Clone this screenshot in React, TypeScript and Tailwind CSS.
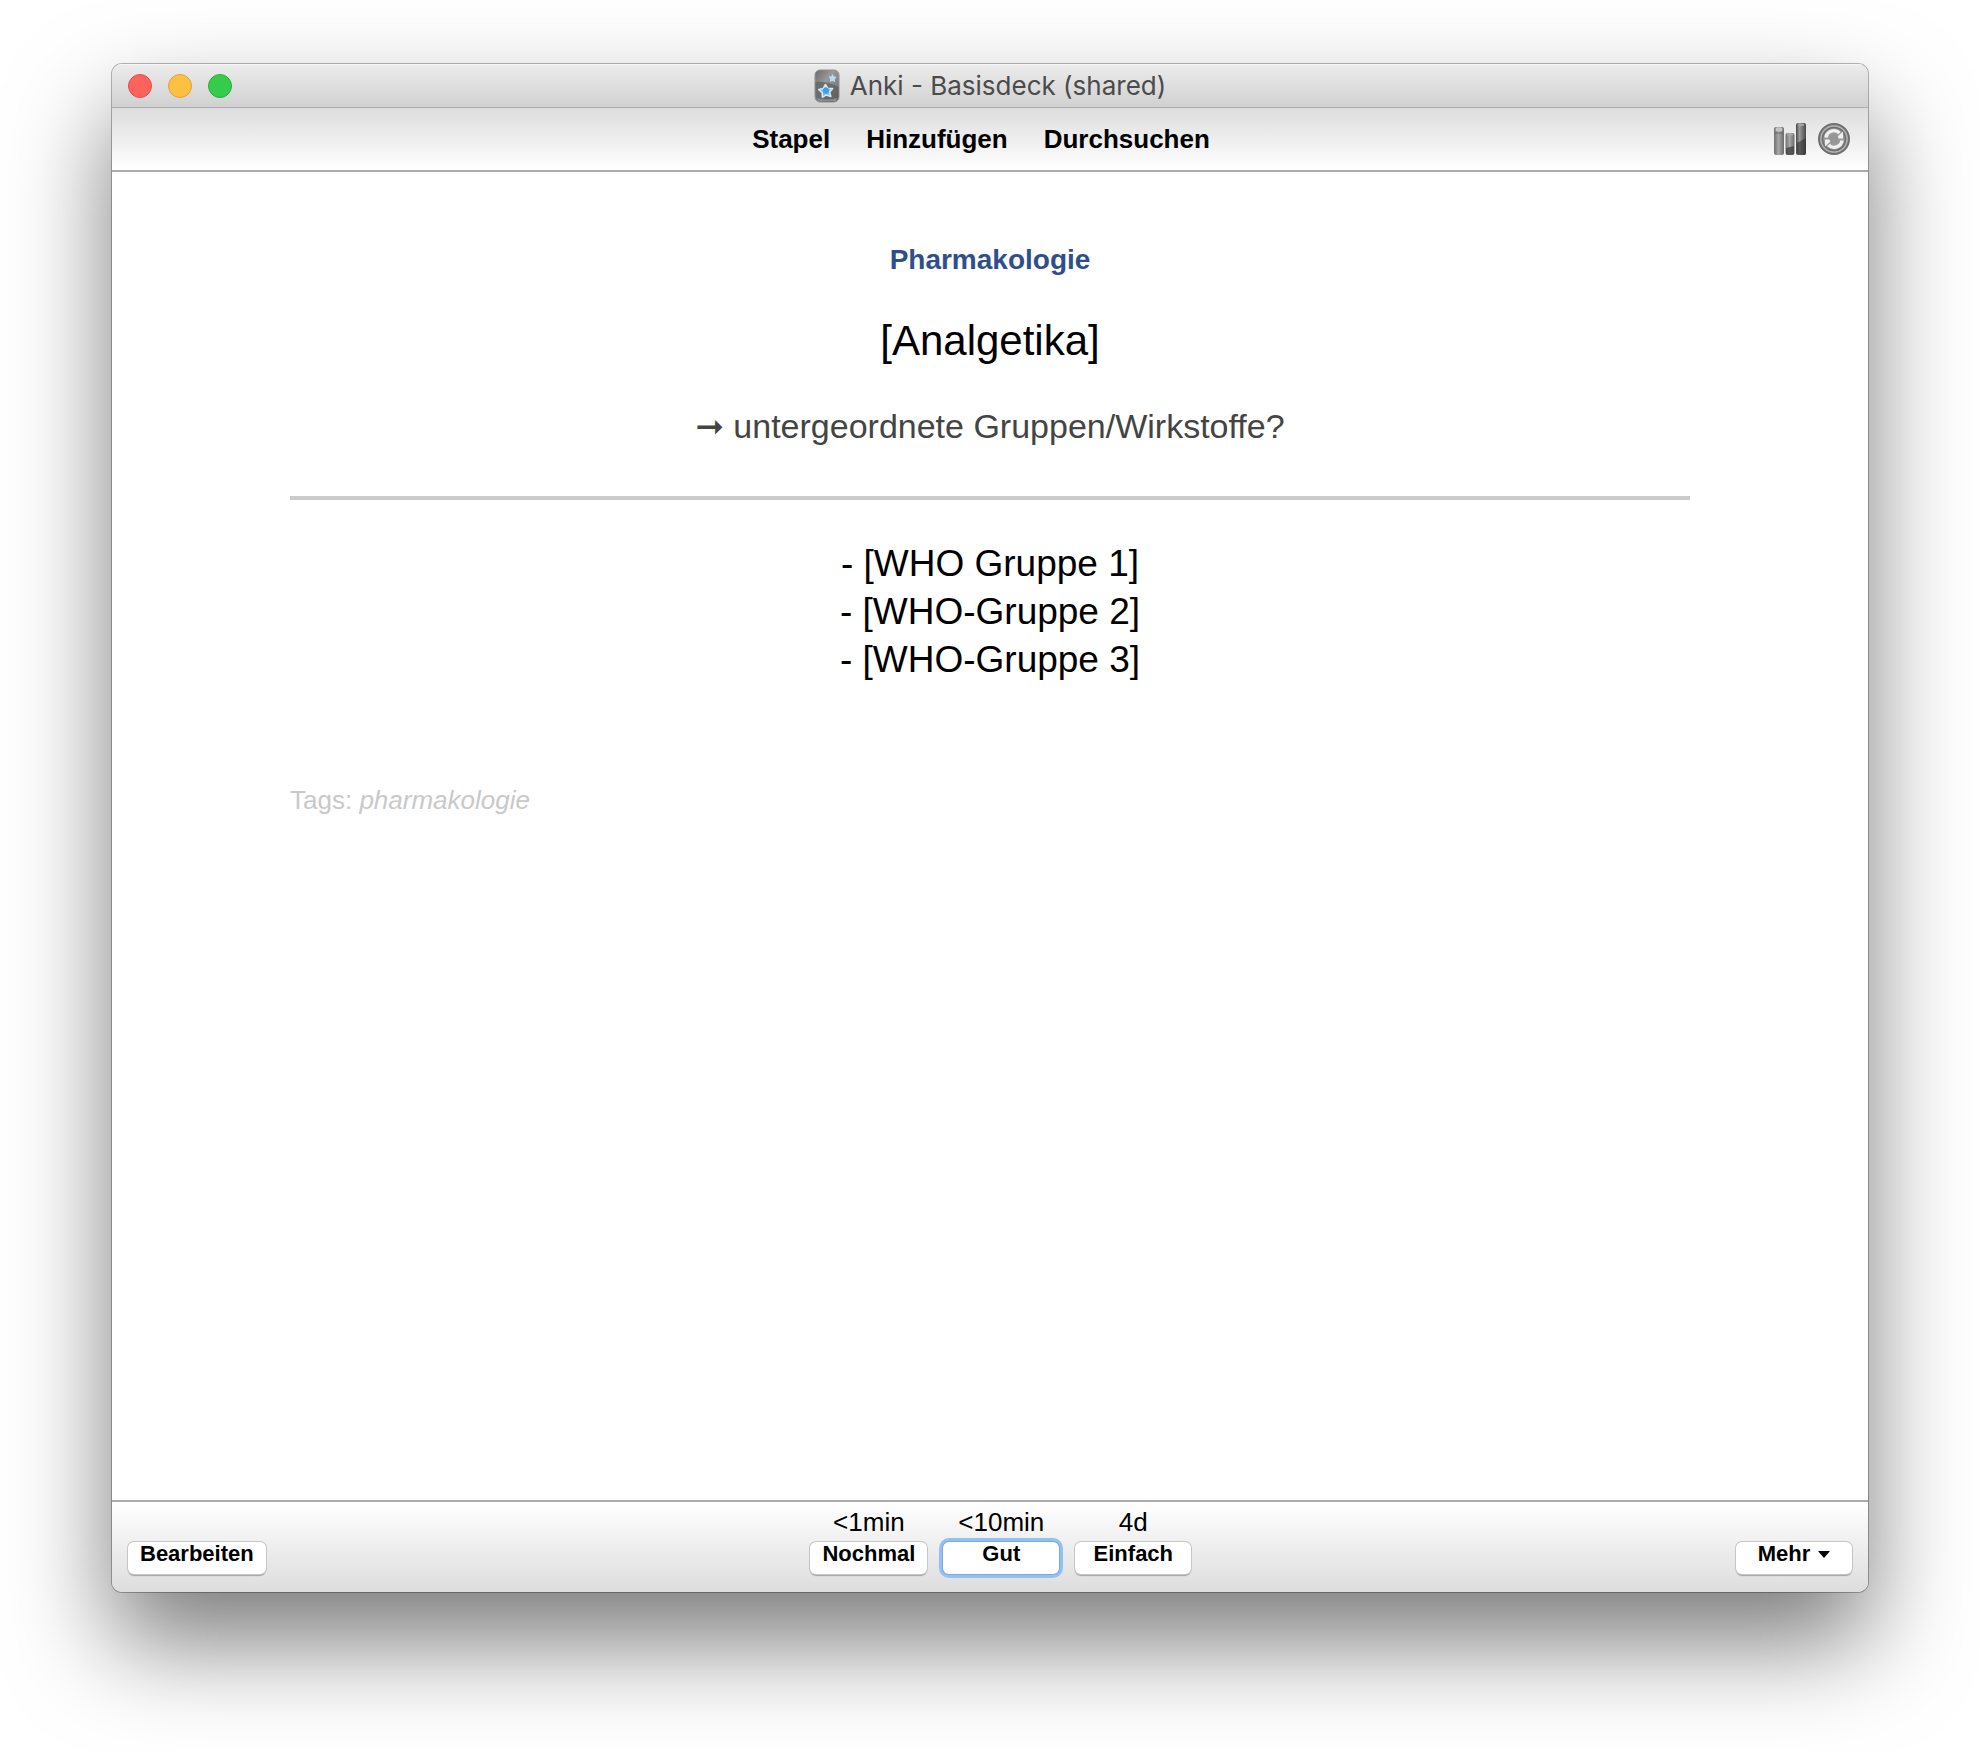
import type { ReactNode } from "react";

const navLinks = ["Stapel", "Hinzufügen", "Durchsuchen"];

const windowControls = [
  { label: "Schließen", color: "border-[#e0504d] bg-[#fe625d]" },
  { label: "Minimieren", color: "border-[#dfa03a] bg-[#fec041]" },
  { label: "Maximieren", color: "border-[#2bac3b] bg-[#35cb4b]" },
];

const answers = [
  { due: "<1min", label: "Nochmal", focused: false },
  { due: "<10min", label: "Gut", focused: true },
  { due: "4d", label: "Einfach", focused: false },
];

const answerLines = ["- [WHO Gruppe 1]", "- [WHO-Gruppe 2]", "- [WHO-Gruppe 3]"];

function DeckIcon() {
  return (
    <svg width="26" height="34" viewBox="0 0 26 34" aria-hidden="true">
      <defs>
        <linearGradient id="deck" x1="0" y1="0" x2="1" y2="1">
          <stop offset="0" stopColor="#6a6a6a" />
          <stop offset="0.4" stopColor="#9a9a9a" />
          <stop offset="1" stopColor="#626262" />
        </linearGradient>
      </defs>
      <rect x="1" y="1" width="24" height="32" rx="5" fill="url(#deck)" stroke="#929292" />
      <path d="M1.500 13Q13 12 24.500 18V27Q24 32 19 32.500H7Q2 32 1.500 27Z" fill="#5c5c5c" opacity="0.7" />
      <path d="M3 29Q12 32 23 29L22 32H5Z" fill="#a9a9a9" opacity="0.6" />
      <path
        d="M11.500 15.500L13.800 19.300L18.600 19.600L15.600 22.900L16.800 27.500L12.300 25.900L8.400 28.200L8.200 23.600L4.800 20.600L9.300 19.400Z"
        fill="#6fb9ec"
        stroke="#cfe6f5"
        strokeWidth="1.600"
        strokeLinejoin="round"
      />
      <circle cx="12" cy="21.500" r="3" fill="#3f9fe6" />
      <path d="M18.500 5L19.900 7.500L22.700 8L20.800 10.200L21.100 13L18.500 11.900L15.900 12.700L16.200 9.900L14.600 7.700L17.300 7.200Z" fill="#b5ddf2" />
    </svg>
  );
}

function StatsIcon() {
  return (
    <svg width="32" height="32" viewBox="0 0 32 32" aria-hidden="true">
      <defs>
        <linearGradient id="barLight" x1="0" x2="1">
          <stop offset="0" stopColor="#6f6f6f" />
          <stop offset="0.450" stopColor="#a8a8a8" />
          <stop offset="1" stopColor="#6b6b6b" />
        </linearGradient>
        <linearGradient id="barDark" x1="0" x2="1">
          <stop offset="0" stopColor="#484848" />
          <stop offset="0.350" stopColor="#9a9a9a" />
          <stop offset="1" stopColor="#484848" />
        </linearGradient>
      </defs>
      <rect x="0" y="4" width="10" height="28" rx="2" fill="url(#barLight)" />
      <rect x="1.500" y="4.500" width="7" height="4" rx="2" fill="#c4c4c4" />
      <path d="M1 10H9" stroke="#6a6a6a" />
      <rect x="11.500" y="10" width="9" height="22" rx="2" fill="url(#barLight)" />
      <path d="M12 25L20 23V30Q20 32 18 32H14Q12 32 12 30Z" fill="#3f3f3f" opacity="0.750" />
      <rect x="13" y="10.500" width="6" height="2" rx="1" fill="#a9a9a9" />
      <rect x="22" y="0" width="10" height="32" rx="2" fill="url(#barDark)" />
      <path d="M23 20L32 15V30Q32 32 30 32H25Q23 32 23 30Z" fill="#303030" opacity="0.600" />
      <rect x="24" y="1" width="6" height="2" rx="1" fill="#a5a5a5" />
    </svg>
  );
}

function SyncIcon() {
  return (
    <svg width="32" height="32" viewBox="0 0 32 32" aria-hidden="true">
      <circle cx="16" cy="16" r="15" fill="#8d8d8d" stroke="#6f6f6f" strokeWidth="2" />
      <circle cx="16" cy="16" r="13" fill="none" stroke="#b3b3b3" strokeWidth="1.500" />
      <circle cx="16" cy="16" r="11.500" fill="#9a9a9a" stroke="#6e6e6e" strokeWidth="1.500" />
      <path d="M8 14.500A8 8 0 0 1 21.500 10" fill="none" stroke="#f0f0f0" strokeWidth="3.400" />
      <path d="M25 8.500V15.500H17.500Z" fill="#f0f0f0" />
      <path d="M24 17.500A8 8 0 0 1 10.500 22" fill="none" stroke="#f0f0f0" strokeWidth="3.400" />
      <path d="M7 23.500V16.500H14.500Z" fill="#f0f0f0" />
      <circle cx="16" cy="16" r="4.500" fill="#969696" />
    </svg>
  );
}

function PushButton({ children, focused = false, menu = false }: { children: ReactNode; focused?: boolean; menu?: boolean }) {
  return (
    <button
      type="button"
      aria-haspopup={menu ? "menu" : undefined}
      className={`flex h-8 min-w-29 items-center justify-center gap-2 rounded-md bg-white px-3 pb-2 text-[22px] leading-6 font-bold ${
        focused
          ? "shadow-[0_0_0_1px_#76abe6,0_0_0_4px_#94c1f2]"
          : "shadow-[0_0_0_1px_#c6c6c6,0_2px_1px_#a3a3a3]"
      }`}
    >
      {children}
    </button>
  );
}

export default function App() {
  return (
    <div className="flex min-h-screen flex-col bg-white px-28 pt-16 pb-40 font-['Liberation_Sans',Arial,sans-serif] text-black">
      <div className="flex flex-1 flex-col overflow-hidden rounded-[10px] bg-white shadow-[0_0_0_1px_rgba(0,0,0,0.28),0_50px_100px_rgba(0,0,0,0.52)]">
        <header className="grid h-11 grid-cols-[1fr_auto_1fr] items-center border-b border-[#adadad] bg-linear-to-b from-[#ececec] to-[#d1d1d1] px-4 shadow-[inset_0_1px_0_#f6f6f6]">
          <div className="flex gap-4">
            {windowControls.map((control) => (
              <button key={control.label} type="button" aria-label={control.label} className={`size-6 rounded-full border ${control.color}`} />
            ))}
          </div>
          <h1 className="flex items-center gap-2.5 font-[Inter,sans-serif] text-[26px] leading-8 text-[#4b4b4b]">
            <DeckIcon />
            Anki - Basisdeck (shared)
          </h1>
        </header>

        <div className="grid h-16 grid-cols-[1fr_auto_1fr] items-center border-b-2 border-[#aaaaaa] bg-linear-to-b from-[#dddddd] to-white px-4">
          <nav className="col-start-2 flex gap-9 pr-[18px] text-[26px] leading-8 font-bold">
            {navLinks.map((link) => (
              <a key={link} href="#">
                {link}
              </a>
            ))}
          </nav>
          <div className="flex justify-end gap-3 pr-0.5">
            <button type="button" aria-label="Statistik">
              <StatsIcon />
            </button>
            <button type="button" aria-label="Synchronisieren">
              <SyncIcon />
            </button>
          </div>
        </div>

        <main className="flex-1 px-[178px] pt-18 text-center">
          <h2 className="text-[28px] leading-8 font-bold text-[#2f4f8b]">Pharmakologie</h2>
          <p className="mt-10 text-[42px] leading-[50px]">[Analgetika]</p>
          <p className="mt-10 text-[34px] leading-10 text-[#444444]">
            <span className="font-['DejaVu_Sans',sans-serif] leading-none">➞</span> untergeordnete Gruppen/Wirkstoffe?
          </p>
          <hr className="mt-[50px] border-t-4 border-[#cbcbcb]" />
          <div className="mt-10 text-[37px] leading-12">
            {answerLines.map((line) => (
              <p key={line}>{line}</p>
            ))}
          </div>
          <p className="mt-25 text-left text-[26px] leading-8 text-[#c9c9c9]">
            Tags: <em>pharmakologie</em>
          </p>
        </main>

        <footer className="flex items-end justify-between border-t-2 border-[#aaaaaa] bg-linear-to-b from-white to-[#dddddd] px-4 pt-1 pb-[18px]">
          <PushButton>Bearbeiten</PushButton>
          <div className="flex gap-4">
            {answers.map((answer) => (
              <div key={answer.label} className="flex flex-col gap-1 text-center">
                <span className="text-[26px] leading-8">{answer.due}</span>
                <PushButton focused={answer.focused}>{answer.label}</PushButton>
              </div>
            ))}
          </div>
          <PushButton menu>
            Mehr
            <svg width="12" height="7" viewBox="0 0 12 7" aria-hidden="true">
              <path d="M0 0H12L6 7Z" />
            </svg>
          </PushButton>
        </footer>
      </div>
    </div>
  );
}
